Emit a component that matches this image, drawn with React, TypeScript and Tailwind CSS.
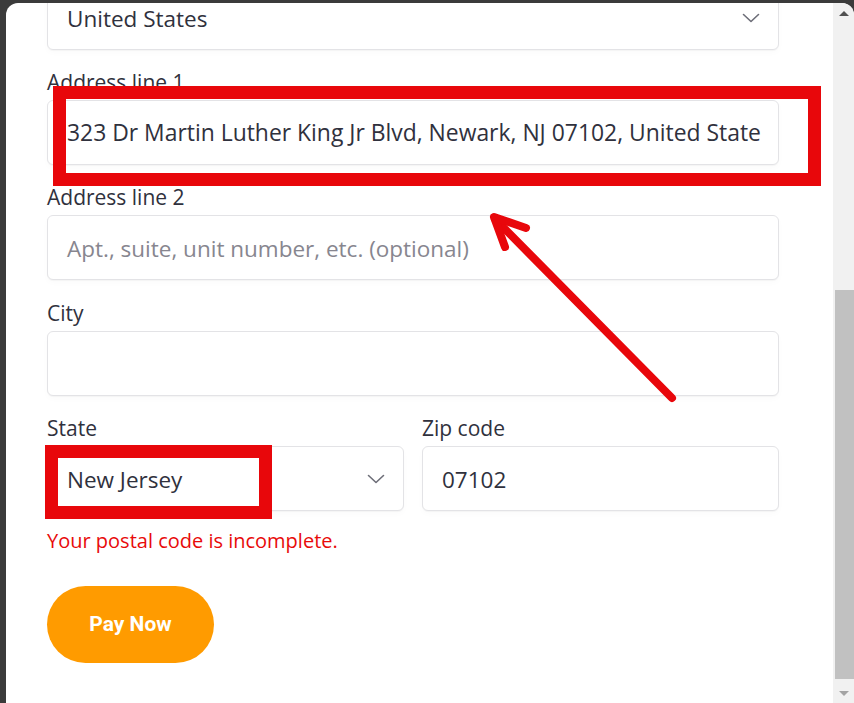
import React from "react";

const FONT = { fontFamily: '"Open Sans", "Noto Sans", sans-serif' };

function Chevron() {
  return (
    <svg width="18" height="10" viewBox="0 0 18 10" fill="none">
      <polyline points="1.5,1.5 9,8.5 16.5,1.5" stroke="#6d6e78" strokeWidth="1.6" strokeLinecap="round" strokeLinejoin="round" />
    </svg>
  );
}

const boxCls =
  "h-[65px] w-full rounded-[6px] border border-[#e3e3e6] bg-white shadow-[0_1px_1px_rgba(0,0,0,0.03),0_3px_6px_rgba(0,0,0,0.02)] flex items-center pl-[19px] pr-[18px] text-[22.5px] text-[#30313d]";

function Label({ children }: { children: React.ReactNode }) {
  return <div className="h-[24px] leading-[24px] text-[21px] text-[#30313d] mb-[6px]">{children}</div>;
}

export default function App() {
  return (
    <div className="relative w-[854px] h-[703px] overflow-hidden bg-[#3b3b3b] pt-[3px] pl-[6px]" style={FONT}>
      <div className="flex h-[712px] bg-white rounded-[12px] overflow-hidden">
        {/* content */}
        <div className="flex-1 overflow-hidden">
          <div className="ml-[41px] w-[732px] mt-[-18px] flex flex-col">
            {/* Country */}
            <div className={boxCls + " justify-between"}>
              <span className="pt-[2px]">United States</span>
              <span className="mt-[1px]">
                <Chevron />
              </span>
            </div>

            <div className="mt-[20px]">
              <Label>Address line 1</Label>
              <div className={boxCls}>
                <div className="whitespace-nowrap w-full text-[22.9px] pt-[2px]">
                  323 Dr Martin Luther King Jr Blvd, Newark, NJ 07102, United State
                </div>
              </div>
            </div>

            <div className="mt-[20px]">
              <Label>Address line 2</Label>
              <div className={boxCls}>
                <span className="text-[#87868f] whitespace-nowrap pt-[2px]">Apt., suite, unit number, etc. (optional)</span>
              </div>
            </div>

            <div className="mt-[21px]">
              <Label>City</Label>
              <div className={boxCls}></div>
            </div>

            <div className="mt-[20px] flex gap-[18px]">
              <div className="flex-1">
                <Label>State</Label>
                <div className={boxCls + " justify-between"}>
                  <span className="pt-[2px]">New Jersey</span>
                  <span className="mt-[1px]">
                    <Chevron />
                  </span>
                </div>
              </div>
              <div className="flex-1">
                <Label>Zip code</Label>
                <div className={boxCls}>
                  <span className="pt-[2px]">07102</span>
                </div>
              </div>
            </div>

            <div className="mt-[18px] h-[24px] leading-[24px] text-[20px] text-[#e80a0a]">
              Your postal code is incomplete.
            </div>

            <div className="mt-[33px]">
              <button
                className="w-[167px] h-[77px] rounded-full bg-[#ff9b00] text-white text-[21px] font-bold"
                style={{ fontFamily: 'Roboto, "Liberation Sans", sans-serif' }}
              >
                Pay Now
              </button>
            </div>
          </div>
        </div>

        {/* scrollbar */}
        <div className="w-[21px] bg-[#f1f1f1] flex flex-col h-[700px]">
          <div className="h-[20px] flex items-center justify-center">
            <div className="w-0 h-0 border-l-[5px] border-r-[5px] border-b-[5px] border-l-transparent border-r-transparent border-b-[#505050]" />
          </div>
          <div className="flex-1 pl-[2px]">
            <div className="mt-[267px] h-[389px] bg-[#c1c1c1]" />
          </div>
          <div className="h-[20px] flex items-center justify-center">
            <div className="w-0 h-0 border-l-[5px] border-r-[5px] border-t-[5px] border-l-transparent border-r-transparent border-t-[#a3a3a3]" />
          </div>
        </div>
      </div>

      {/* annotations */}
      <div className="absolute left-[53px] top-[86px] w-[768px] h-[100px] border-[13px] border-[#e8070b]" />
      <div className="absolute left-[45px] top-[445px] w-[227px] h-[74px] border-[13px] border-[#e8070b]" />
      <svg className="absolute left-0 top-0" width="854" height="703" viewBox="0 0 854 703">
        <g stroke="#e8070b" strokeWidth="8" strokeLinecap="round" strokeLinejoin="round" fill="none">
          <line x1="672" y1="398" x2="495" y2="219" />
          <polyline points="505,247 494,217 526,228" />
        </g>
      </svg>
    </div>
  );
}
